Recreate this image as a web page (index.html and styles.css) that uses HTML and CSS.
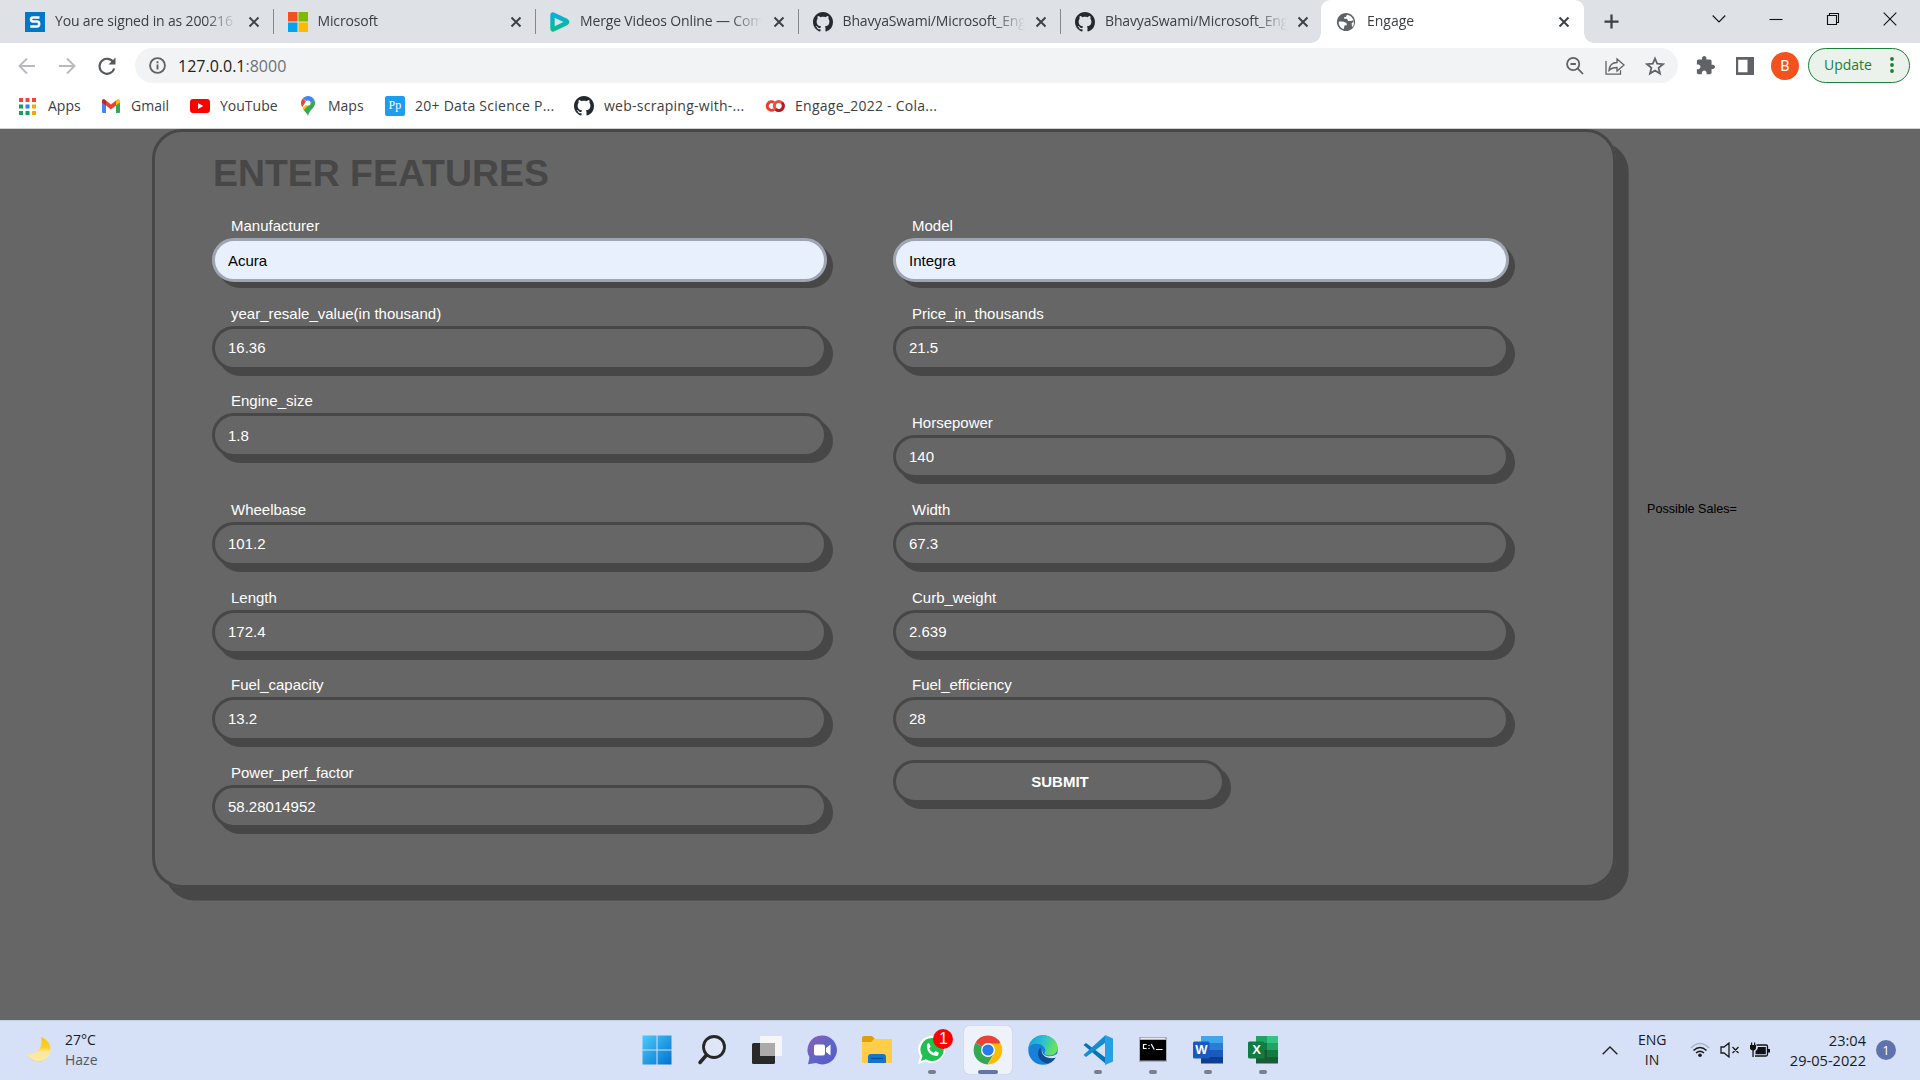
FILE: index.html
```html
<!DOCTYPE html>
<html lang="en">
<head>
<meta charset="utf-8">
<title>Engage</title>
<link rel="stylesheet" href="styles.css">
</head>
<body>
<svg class="defs" width="0" height="0" aria-hidden="true">
  <symbol id="github" viewBox="0 0 16 16"><path fill="#24292f" d="M8 0C3.58 0 0 3.58 0 8c0 3.54 2.29 6.53 5.47 7.59.4.07.55-.17.55-.38 0-.19-.01-.82-.01-1.49-2.01.37-2.53-.49-2.69-.94-.09-.23-.48-.94-.82-1.13-.28-.15-.68-.52-.01-.53.63-.01 1.08.58 1.23.82.72 1.21 1.87.87 2.33.66.07-.52.28-.87.51-1.07-1.78-.2-3.64-.89-3.64-3.95 0-.87.31-1.59.82-2.15-.08-.2-.36-1.02.08-2.12 0 0 .67-.21 2.2.82.64-.18 1.32-.27 2-.27s1.36.09 2 .27c1.53-1.04 2.2-.82 2.2-.82.44 1.1.16 1.92.08 2.12.51.56.82 1.27.82 2.15 0 3.07-1.87 3.75-3.65 3.95.29.25.54.73.54 1.48 0 1.07-.01 1.93-.01 2.2 0 .21.15.46.55.38A8.01 8.01 0 0 0 16 8c0-4.42-3.58-8-8-8z"/></symbol>
  <symbol id="close" viewBox="0 0 12 12"><path d="M1.500 1.500l9 9M10.500 1.500l-9 9" stroke="#3c4043" stroke-width="1.900" fill="none"/></symbol>
</svg>

<header class="tabs">
  <div class="tab">
    <svg class="fav" viewBox="0 0 20 20"><path fill="#0078c8" d="M0 0h20v20H0z"/><path d="M14.500 5.600H8q-2 0-2 2t2 2h4q2.200 0 2.200 2.400t-2.200 2.400H5.300" fill="none" stroke="#fff" stroke-width="2.500"/></svg>
    <span class="title">You are signed in as 200216</span>
    <svg class="x"><use href="#close"/></svg>
  </div>
  <div class="tab">
    <svg class="fav" viewBox="0 0 20 20"><path fill="#f25022" d="M0 0h9.500v9.500H0z"/><path fill="#7fba00" d="M10.500 0H20v9.500h-9.500z"/><path fill="#00a4ef" d="M0 10.500h9.500V20H0z"/><path fill="#ffb900" d="M10.500 10.500H20V20h-9.500z"/></svg>
    <span class="title">Microsoft</span>
    <svg class="x"><use href="#close"/></svg>
  </div>
  <div class="tab">
    <svg class="fav" viewBox="0 0 20 20"><defs><linearGradient id="clip" x2="0" y2="1"><stop stop-color="#06b0d8"/><stop offset="1" stop-color="#0bbd90"/></linearGradient></defs><path d="M2.500 3.200v13.600q0 1 1 .5L16.500 11q1.400-1 0-2L3.500 2.700q-1-.5-1 .5z" fill="none" stroke="url(#clip)" stroke-width="4.400"/></svg>
    <span class="title">Merge Videos Online — Com</span>
    <svg class="x"><use href="#close"/></svg>
  </div>
  <div class="tab">
    <svg class="fav"><use href="#github"/></svg>
    <span class="title">BhavyaSwami/Microsoft_Eng</span>
    <svg class="x"><use href="#close"/></svg>
  </div>
  <div class="tab last">
    <svg class="fav"><use href="#github"/></svg>
    <span class="title">BhavyaSwami/Microsoft_Eng</span>
    <svg class="x"><use href="#close"/></svg>
  </div>
  <div class="tab active">
    <svg class="fav" viewBox="1 1 22 22"><path fill="#5f6368" d="M12 2C6.480 2 2 6.480 2 12s4.480 10 10 10 10-4.480 10-10S17.520 2 12 2z"/><path fill="#fff" d="M4 11.500l1.500 0 4 .3 3 1.200 .5 2.500h-2.500l-1 4.300C6 19 3.800 15.500 4 11.500zM13 4l-1 2.500h-2v2h3l1.500 2.500h3l2.500-1 .2 2-2 1.500 .3 3 1 1c2-3.500 1.500-8-1-10.500l-2-1.800z"/></svg>
    <span class="title">Engage</span>
    <svg class="x"><use href="#close"/></svg>
  </div>
  <svg class="plus" viewBox="0 0 16 16"><path d="M8 .5v15M.5 8h15" stroke="#3c4043" stroke-width="2.400"/></svg>
  <div class="controls">
    <svg viewBox="0 0 14 14"><path d="M.7 3.500L7 10l6.300-6.500"/></svg>
    <svg viewBox="0 0 14 14"><path d="M.5 7.500h13"/></svg>
    <svg viewBox="0 0 14 14"><path d="M1.500 3.500h9v9h-9zM3.500 3.500v-2h9v9h-2"/></svg>
    <svg viewBox="0 0 14 14"><path d="M.7.7l12.600 12.600M13.300.7L.7 13.300"/></svg>
  </div>
</header>

<div class="toolbar">
  <div class="nav">
    <svg viewBox="0 0 20 20" class="dim"><path d="M18 10H3M10 2.500L2.500 10l7.500 7.500"/></svg>
    <svg viewBox="0 0 20 20" class="dim"><path d="M2 10h15M10 2.500l7.500 7.500-7.500 7.500"/></svg>
    <svg viewBox="0 0 20 20"><path d="M16.500 6.500A7.500 7.500 0 1 0 17.200 12.500"/><path d="M18.500 1.500v7h-7z" class="solid"/></svg>
  </div>
  <div class="omnibox">
    <svg class="info" viewBox="0 0 16 16"><circle cx="8" cy="8" r="7" fill="none" stroke="#5f6368" stroke-width="1.700"/><path d="M8 7v4.800M8 4v1.800" stroke="#5f6368" stroke-width="1.800"/></svg>
    <span class="url">127.0.0.1<i>:8000</i></span>
    <div class="actions">
      <svg viewBox="0 0 20 20"><circle cx="8.200" cy="8" r="6.100"/><path d="M5.500 8h5.400M12.600 12.400l5.400 5.600"/></svg>
      <svg viewBox="0 0 20 20" class="thin"><path d="M1 5v13.200h14.500v-4M4 14.500c.5-5 3.500-8 8-8V3l7 6-7 6v-3.500c-3.500 0-6 1-8 3z"/></svg>
      <svg viewBox="0 0 20 20"><path d="M10 2.500l2.200 5.200 5.800.5-4.400 3.700 1.400 5.600-5-3-5 3 1.400-5.600L2 8.200l5.800-.5z"/></svg>
    </div>
  </div>
  <svg class="puzzle" viewBox="1 1 22 22"><path fill="#5f6368" d="M20.500 11H19V7c0-1.100-.9-2-2-2h-4V3.500C13 2.120 11.880 1 10.500 1S8 2.120 8 3.500V5H4c-1.100 0-1.990.9-1.990 2v3.800H3.500c1.490 0 2.700 1.210 2.700 2.700s-1.210 2.700-2.700 2.700H2V20c0 1.100.9 2 2 2h3.800v-1.500c0-1.490 1.210-2.700 2.700-2.700 1.490 0 2.700 1.210 2.700 2.700V22H17c1.100 0 2-.9 2-2v-4h1.500c1.380 0 2.500-1.120 2.500-2.500S21.880 11 20.500 11z"/></svg>
  <svg class="panel" viewBox="0 0 18 18"><path fill="#5f6368" fill-rule="evenodd" d="M0 0h18v18H0zM2.200 2.800v12.400h9.300V2.800z"/></svg>
  <span class="avatar">B</span>
  <span class="update">Update<svg viewBox="0 0 4 16"><circle cx="2" cy="2" r="1.900"/><circle cx="2" cy="8" r="1.900"/><circle cx="2" cy="14" r="1.900"/></svg></span>
</div>

<nav class="bookmarks">
  <span class="bm apps"><svg class="i17" viewBox="0 0 17 17"><path fill="#f4433c" d="M0 0h4v4H0zM6.500 0h4v4h-4zM13 0h4v4h-4z"/><path fill="#17a05c" d="M0 6.500h4v4H0zM0 13h4v4H0zM6.500 13h4v4h-4z"/><path fill="#1e88f0" d="M6.500 6.500h4v4h-4z"/><path fill="#f7a50a" d="M13 6.500h4v4h-4zM13 13h4v4h-4z"/></svg>Apps</span>
  <span class="bm gmail"><svg class="i18" viewBox="0 0 18 14"><path fill="#4285f4" d="M0 3v10q0 1 1 1h3V5z"/><path fill="#34a853" d="M18 3v10q0 1-1 1h-3V5z"/><path fill="#ea4335" d="M4 1.500l5 4 5-4v5l-5 4-5-4z"/><path fill="#c5221f" d="M0 3V2q0-2 2-2l2 1.500v5L0 3.500z"/><path fill="#fbbc04" d="M18 3V2q0-2-2-2l-2 1.500v5l4-3z"/></svg>Gmail</span>
  <span class="bm yt"><svg class="i20" viewBox="0 0 20 14"><rect width="20" height="14" rx="3" fill="#f00"/><path fill="#fff" d="M8 4l5.300 3L8 10z"/></svg>YouTube</span>
  <span class="bm maps"><svg class="i14" viewBox="0 0 14 20"><path fill="#34a853" d="M7 20c.6-3 2-5 4-7 2-2.200 3-4 3-6 0-1.500-.5-2.800-1-3.700L2.500 14C5 16.500 6.400 18 7 20z"/><path fill="#fbbc04" d="M1.500 12.200L5 9l4.500-.5 2.200-4-9 9.700z"/><path fill="#ea4335" d="M1.700 2.500L5 5.500 1.200 11C.3 9.600 0 8.300 0 7c0-1.800.7-3.300 1.700-4.500z"/><path fill="#4285f4" d="M1.700 2.500C3 1 4.900 0 7 0c2.500 0 4.900 1.300 6 3.300L9.500 8z"/><circle cx="7" cy="7" r="2.600" fill="#fff"/></svg>Maps</span>
  <span class="bm long pp"><b class="ppico">Pp</b>20+ Data Science P...</span>
  <span class="bm long web"><svg class="i20"><use href="#github"/></svg>web-scraping-with-...</span>
  <span class="bm long"><svg class="i20" viewBox="0 0 20 14"><path d="M9 3.500A4.300 4.300 0 1 0 9 10.500" fill="none" stroke="#e8402f" stroke-width="3"/><circle cx="13.800" cy="7" r="4.500" fill="none" stroke="#f04b3a" stroke-width="3"/><path d="M17 3.800a4.500 4.500 0 0 1-6.400 6.400" fill="none" stroke="#b71c1c" stroke-width="3"/></svg>Engage_2022 - Cola...</span>
</nav>

<main class="page">
  <form class="card">
    <h1>ENTER FEATURES</h1>
    <div class="grid">
      <label class="field filled">Manufacturer<input value="Acura"></label>
      <label class="field filled">Model<input value="Integra"></label>
      <label class="field">year_resale_value(in thousand)<input value="16.36"></label>
      <label class="field">Price_in_thousands<input value="21.5"></label>
      <label class="field nudge">Engine_size<input value="1.8"></label>
      <label class="field low">Horsepower<input value="140"></label>
      <label class="field">Wheelbase<input value="101.2"></label>
      <label class="field">Width<input value="67.3"></label>
      <label class="field">Length<input value="172.4"></label>
      <label class="field">Curb_weight<input value="2.639"></label>
      <label class="field">Fuel_capacity<input value="13.2"></label>
      <label class="field">Fuel_efficiency<input value="28"></label>
      <label class="field short">Power_perf_factor<input value="58.28014952"></label>
      <button type="button" class="submit">SUBMIT</button>
    </div>
  </form>
  <p class="sales">Possible Sales=</p>
</main>

<footer class="taskbar">
  <div class="weather">
    <svg viewBox="0 0 26 26"><defs><linearGradient id="moon" x2="0" y2="1"><stop stop-color="#fdc500"/><stop offset=".45" stop-color="#fbd130"/><stop offset=".6" stop-color="#fbe69b"/><stop offset="1" stop-color="#fdeaa8"/></linearGradient></defs><path d="M1 20q10 8 21-2-8 12-21 2z" fill="#a9b1c2"/><path d="M14 0c8 3 11 10 9 16C20 27 5 27 0 17c9 1 17-5 14-17z" fill="url(#moon)"/></svg>
    <div><p>27°C</p><p class="soft">Haze</p></div>
  </div>
  <div class="apps-row">
    <span class="app"><svg viewBox="0 0 30 30"><defs><linearGradient id="win" x2="1" y2="1"><stop stop-color="#4ccbfa"/><stop offset="1" stop-color="#0072cf"/></linearGradient></defs><path fill="url(#win)" d="M.5.500h14v14H.5zM15.500.500h14v14h-14zM.5 15.500h14v14H.5zM15.500 15.500h14v14h-14z"/></svg></span>
    <span class="app"><svg viewBox="0 0 30 30"><circle cx="17" cy="12" r="10.500" fill="#dfe6f5" stroke="#272727" stroke-width="2.800"/><path d="M9.500 20L3 27.500" stroke="#272727" stroke-width="3.500" stroke-linecap="round"/></svg></span>
    <span class="app"><svg viewBox="0 0 30 30"><rect y="8" width="23" height="21" rx="1.500" fill="#292929"/><rect x="8" y="1" width="22" height="20" rx="1" fill="#f6f6f6"/><path fill="#aaa" d="M8 8h15v13H8z"/></svg></span>
    <span class="app"><svg viewBox="0 0 30 30"><defs><linearGradient id="chat" x2="1" y2="1"><stop stop-color="#8b5cab"/><stop offset=".5" stop-color="#6266c9"/><stop offset="1" stop-color="#5058c8"/></linearGradient></defs><path fill="url(#chat)" d="M15 .500a14.500 14.500 0 1 1-6 27.500L1 29.300l1.500-7A14.500 14.500 0 0 1 15 .500z"/><rect x="7" y="9.500" width="11" height="11" rx="2" fill="#fff"/><path fill="#fff" d="M19 13l4.500-3.500v11L19 17z"/></svg></span>
    <span class="app"><svg viewBox="0 0 30 30"><path fill="#dda00a" d="M0 3q0-2 2-2h8l3 3-3 4H0z"/><path fill="#ffcd48" d="M0 7h9l3-3h18v24H0z"/><path fill="#1474d4" d="M6 28v-6q0-3 3-3h12q3 0 3 3v6z"/><path d="M9 23.500h12" stroke="#084d90" stroke-width="1.200"/></svg></span>
    <span class="app run"><svg viewBox="0 0 30 30"><path fill="#fff" d="M15 1a13.500 13.500 0 1 1-6.500 25.500L1 29l2.200-7.500A13.500 13.500 0 0 1 15 1z"/><path fill="#20c050" d="M15 3a11.500 11.500 0 1 1-6 21.200L4 26l1.500-5A11.500 11.500 0 0 1 15 3z"/><path d="M10 9c-1 8 4 12 10.500 12l1.500-3-3.500-2-2 2q-3-1.500-4.300-4.500l1.500-2L12 8z" fill="#fff"/></svg><i class="badge">1</i></span>
    <span class="app run current"><svg viewBox="0 0 30 30"><path fill="#ea4335" d="M15 15L2.500 7.800A14.300 14.300 0 0 1 27.500 8z"/><path fill="#34a853" d="M15 15L2.500 7.800A14.400 14.400 0 0 0 14.500 29.400l6.500-11z"/><path fill="#fbbc05" d="M15 8.500h12.700A14.400 14.400 0 0 1 14.500 29.400l6.500-11z"/><circle cx="15" cy="15" r="7" fill="#fff"/><circle cx="15" cy="15" r="5.600" fill="#287bef"/></svg></span>
    <span class="app"><svg viewBox="0 0 30 30"><defs><linearGradient id="edge" x2="1" y2=".3"><stop stop-color="#169bd8"/><stop offset=".5" stop-color="#26bfd5"/><stop offset="1" stop-color="#68e260"/></linearGradient></defs><circle cx="15" cy="15" r="14.700" fill="#1581d8"/><path fill="url(#edge)" d="M.5 13C1.500 5 8 .300 15 .300c9 0 15 6.700 14.700 12.700 0 7-8 9-12.500 6.500-2-1.500 1.500-3-.5-6.500C14 8 4 7 .5 13z"/><path fill="#0f4c96" d="M13 12c-5 4-4 14 6 16.500 4-.5 8-4 9.500-7.500-9 3.500-17-1-15.500-9z"/><path fill="#d9e4f8" d="M15 12.500c-2 3-.5 7.500 4 8.500 4 1 8-.5 11.500-3l-2 4.500c-11 3-17-4-13.500-10z"/></svg></span>
    <span class="app run"><svg viewBox="0 0 30 30"><path fill="#0075b8" d="M.5 10l2.500-2 20 15v6z"/><path fill="#168bd0" d="M.5 20L22 .500V8L3 22z"/><path fill="#25a0e6" d="M22 0l8 3.500v23L22 30z"/></svg></span>
    <span class="app run"><svg viewBox="0 0 30 30"><path fill="#aab0ba" d="M1 2h28v25H1z"/><path fill="#000" d="M2 5h26v20.500H2z"/><path d="M3 3.500h24" stroke="#e8eaf0"/><path d="M8 9.500H5.500v4H8M11 10.500v.01M11 13.500v.01M13.500 9.500l2.500 4.500M18.500 14.500h5.500" fill="none" stroke="#fff" stroke-width="1.200" stroke-linecap="square"/></svg></span>
    <span class="app run"><svg viewBox="0 0 30 30"><path fill="#41a5ee" d="M8 1h22v8H8z"/><path fill="#2b7cd3" d="M8 8h22v7H8z"/><path fill="#185abd" d="M8 15h22v7H8z"/><path fill="#103f91" d="M8 22h22v6.500H8z"/><rect y="6.500" width="16.500" height="17" rx="1.500" fill="#185abd"/></svg><b class="letter">W</b></span>
    <span class="app run"><svg viewBox="0 0 30 30"><path fill="#21a366" d="M8 1h11v8H8z"/><path fill="#33c481" d="M19 1h11v8H19z"/><path fill="#107c41" d="M8 8h22v14H8z"/><path fill="#21a366" d="M19 8h11v7H19z"/><path fill="#185c37" d="M8 15h11v7h11v6.500H8z"/><rect y="6.500" width="16.500" height="17" rx="1.500" fill="#107c41"/></svg><b class="letter">X</b></span>
  </div>
  <div class="tray">
    <svg class="up" viewBox="0 0 16 9"><path d="M.7 8.300L8 1l7.300 7.300" fill="none" stroke="#222" stroke-width="1.400"/></svg>
    <div class="lang"><p>ENG</p><p>IN</p></div>
    <svg class="wifi" viewBox="0 0 20 16"><path d="M.8 6Q10-3 19.200 6" fill="none" stroke="#aab4c8" stroke-width="1.500"/><path d="M3.500 8.500q6.500-6 13 0M6 11q4-3.500 8 0" fill="none" stroke="#1b1b1b" stroke-width="1.500"/><circle cx="10" cy="13.300" r="1.800" fill="#1b1b1b"/></svg>
    <svg class="mute" viewBox="0 0 20 16"><path d="M1 5h3l5-4v14l-5-4H1zM12.500 5l6 6M18.500 5l-6 6" fill="none" stroke="#1b1b1b" stroke-width="1.300"/></svg>
    <svg class="battery" viewBox="0 0 20 16"><path d="M6.500 3H16q1.500 0 1.500 1.500v8q0 1.500-1.500 1.500H5" fill="none" stroke="#111" stroke-width="1.300"/><path fill="#111" d="M7.800 5h8v7.300H5.500V9q2-1 2.300-3zM18 7h2v3.500h-2zM0 3h6v3.500q-1 2-2.300 2V15H2.400V8.500Q.500 8 0 6.500zM1 .500h1.200V3H1zM4 .500h1.200V3H4z"/></svg>
    <div class="clock"><p>23:04</p><p>29-05-2022</p></div>
    <span class="count">1</span>
  </div>
</footer>
</body>
</html>
```
FILE: styles.css
```css
* { box-sizing: border-box; }
body {
  margin: 0;
  width: 1920px;
  height: 1080px;
  overflow: hidden;
  display: flex;
  flex-direction: column;
  background: #fff;
  font: 14px/20px "Open Sans", "Noto Sans", sans-serif;
  color: #3c4043;
}
p, h1 { margin: 0; }
svg { display: block; flex: none; }
.defs { position: absolute; }

/* tab strip */
.tabs {
  height: 43px;
  flex: none;
  display: flex;
  align-items: center;
  padding-left: 12px;
  background: #dee1e6;
}
.tab {
  width: 262.5px;
  height: 43px;
  flex: none;
  display: flex;
  align-items: center;
  padding: 0 15px 0 13px;
  background: linear-gradient(#85898e, #85898e) right 1px top 9px / 1px 25px no-repeat;
}
.tab.last { background: none; }
.tab.last .x { margin: 0 1px 0 9px; }
.fav { width: 20px; height: 20px; margin-right: 10px; }
.title {
  flex: 1;
  height: 22px;
  overflow: hidden;
  white-space: nowrap;
  letter-spacing: -0.15px;
  -webkit-mask: linear-gradient(90deg, #000 150px, transparent 182px);
  mask: linear-gradient(90deg, #000 150px, transparent 182px);
}
.x { width: 12px; height: 12px; margin-left: 10px; }
.tab.active {
  position: relative;
  width: 263px;
  margin-left: -3.5px;
  padding: 0 14px 0 15px;
  background: #fff;
  border-radius: 9px 9px 0 0;
}
.active .fav { margin-right: 11px; }
.active .title { letter-spacing: 0; }
.tab.active::before, .tab.active::after {
  content: "";
  position: absolute;
  bottom: 0;
  width: 10px;
  height: 10px;
}
.tab.active::before { left: -10px; background: radial-gradient(circle at 0 0, transparent 9.5px, #fff 10px); }
.tab.active::after { right: -10px; background: radial-gradient(circle at 100% 0, transparent 9.5px, #fff 10px); }
.plus { width: 15px; height: 15px; margin-left: 20px; }
.controls { display: flex; gap: 43px; margin: -6px 0 0 93px; }
.controls svg { width: 14px; height: 14px; }
.controls path { fill: none; stroke: #111; stroke-width: 1.1; }

/* toolbar */
.toolbar { height: 45px; flex: none; display: flex; align-items: center; }
.nav { display: flex; gap: 20px; width: 135px; padding-left: 17px; }
.nav svg { width: 20px; height: 20px; }
.nav path { fill: none; stroke: #55595e; stroke-width: 2.1; }
.nav .dim path { stroke: #b8babd; stroke-width: 1.9; }
.nav .solid { fill: #55595e; stroke: none; }
.omnibox {
  width: 1543px;
  height: 35px;
  display: flex;
  align-items: center;
  padding: 0 13px 0 14px;
  border-radius: 18px;
  background: #f1f3f4;
}
.info { width: 17px; height: 17px; }
.url { margin-left: 12px; font-size: 16px; color: #202124; }
.url i { font-style: normal; color: #6c7176; }
.actions { margin-left: auto; display: flex; gap: 20px; }
.actions svg { width: 20px; height: 20px; }
.actions path, .actions circle { fill: none; stroke: #5f6368; stroke-width: 1.8; }
.actions .thin path { stroke-width: 1.3; }
.puzzle { width: 19px; height: 19px; margin-left: 18px; }
.panel { width: 18px; height: 18px; margin-left: 21px; }
.avatar {
  width: 28px;
  height: 28px;
  margin-left: 17px;
  border-radius: 50%;
  background: #f4511e;
  color: #fff;
  font: 15px/28px Roboto, sans-serif;
  text-align: center;
}
.update {
  width: 102px;
  height: 35px;
  margin-left: 9px;
  padding: 0 15px 1px 15px;
  display: flex;
  align-items: center;
  justify-content: space-between;
  border: 1px solid #188038;
  border-radius: 18px;
  background: #ebf2ec;
  color: #188038;
}
.update svg { width: 4px; height: 16px; fill: #188038; }

/* bookmarks bar */
.bookmarks {
  height: 41px;
  flex: none;
  display: flex;
  align-items: center;
  padding: 0 0 4px 19px;
  border-bottom: 1px solid #d0d1d3;
}
.bm { display: flex; align-items: center; white-space: nowrap; letter-spacing: 0; }
.bm.long { letter-spacing: 0.26px; }
.bm svg { height: 20px; margin-right: 10px; }
.apps { width: 83px; }
.gmail { width: 88px; }
.yt { width: 111px; }
.maps { width: 84px; }
.pp { width: 189px; }
.web { width: 191px; }
.bm .i17 { width: 17px; height: 17px; margin-right: 12px; }
.bm .i18 { width: 18px; height: 14px; margin-right: 11px; }
.i20 { width: 20px; }
.bm .i14 { width: 14px; margin-right: 13px; }
.ppico {
  width: 20px;
  height: 20px;
  margin-right: 10px;
  border-radius: 2px;
  background: #1e9cf0;
  color: #fff;
  font: 12px/18px "Liberation Serif", serif;
  text-align: center;
}

/* prediction page */
.page {
  height: 891px;
  flex: none;
  display: flex;
  padding-left: 152px;
  background: #666;
  font-family: "Liberation Sans", Arial, sans-serif;
  overflow: hidden;
}
.card {
  width: 1464px;
  height: 759px;
  padding: 17px 57px;
  border: 3px solid #474747;
  border-radius: 30px;
  box-shadow: 12.6px 12.6px #474747;
}
h1 { height: 66px; padding-left: 1px; font-size: 37.4px; line-height: 48px; color: #474747; }
.grid {
  display: grid;
  grid-template-columns: 615px 616px;
  grid-template-rows: 88px 87px 109px 88px 87px 88px 70px;
  column-gap: 66px;
}
.field { display: flex; flex-direction: column; padding-left: 19px; font-size: 15px; line-height: 21px; height: 67px; color: #fff; }
.field input {
  width: calc(100% + 19px);
  height: 44px;
  margin: 2px 0 0 -19px;
  padding: 0 13px 2px;
  border: 3px solid #474747;
  border-radius: 22px;
  background: #666;
  box-shadow: 6px 6px #474747;
  font: inherit;
  color: #fff;
  outline: none;
}
.field.filled input { background: #e8f0fe; border-color: #a0a6b1; color: #000; padding: 1px 13px 0; }
.field.nudge input { padding-bottom: 0; }
.field.low { margin-top: 22px; }
.field.low input, .field.short input { height: 43px; padding-bottom: 0; }
.submit {
  width: 332px;
  height: 43px;
  margin-top: -2px;
  padding: 0 0 0 2px;
  border: 3px solid #474747;
  border-radius: 22px;
  background: #666;
  box-shadow: 6px 6px #474747;
  font: bold 15px "Liberation Sans", Arial, sans-serif;
  color: #fff;
}
.sales { margin: 370px 0 0 31px; font-size: 12.6px; color: #000; }

/* taskbar */
.taskbar {
  height: 60px;
  flex: none;
  display: flex;
  align-items: center;
  padding-bottom: 1px;
  background: #d6e0f6;
  border-top: 1px solid #c5cee2;
  font-size: 14px;
  color: #1b1b1b;
}
.weather { width: 630px; display: flex; align-items: center; padding-left: 27px; gap: 12px; }
.weather svg { width: 26px; height: 26px; }
.weather .soft { color: #505866; }
.apps-row { width: 964px; display: flex; gap: 7.1px; padding-left: 3px; }
.app { position: relative; width: 48px; height: 48px; display: flex; justify-content: center; padding-top: 9px; border-radius: 5px; }
.app svg { width: 30px; height: 30px; }
.run::after {
  content: "";
  position: absolute;
  bottom: 0;
  left: 20px;
  width: 8px;
  height: 4px;
  border-radius: 2px;
  background: #7a7f8b;
}
.current { background: #edf2fb; box-shadow: 0 0 1px #aab; }
.current::after { left: 14px; width: 20px; background: #6474aa; }
.badge {
  position: absolute;
  left: 25px;
  top: 3px;
  width: 20px;
  height: 20px;
  border-radius: 50%;
  background: #fe0000;
  color: #fff;
  font: 16px/20px "Liberation Sans", sans-serif;
  text-align: center;
}
.letter { position: absolute; left: 9px; top: 15px; width: 17px; color: #fff; font: bold 13px/18px "Liberation Sans", sans-serif; text-align: center; }
.tray { display: flex; align-items: center; padding-left: 8px; }
.up { width: 16px; height: 9px; }
.lang { width: 28px; margin: 0 24px 0 20px; text-align: center; }
.wifi, .mute, .battery { width: 20px; height: 16px; margin-right: 10px; }
.clock { width: 80px; margin-left: 6px; text-align: right; font-size: 14.6px; white-space: nowrap; }
.count { width: 20px; height: 20px; margin-left: 10px; border-radius: 50%; background: #6072ac; color: #fff; font-size: 13px; text-align: center; }
```
